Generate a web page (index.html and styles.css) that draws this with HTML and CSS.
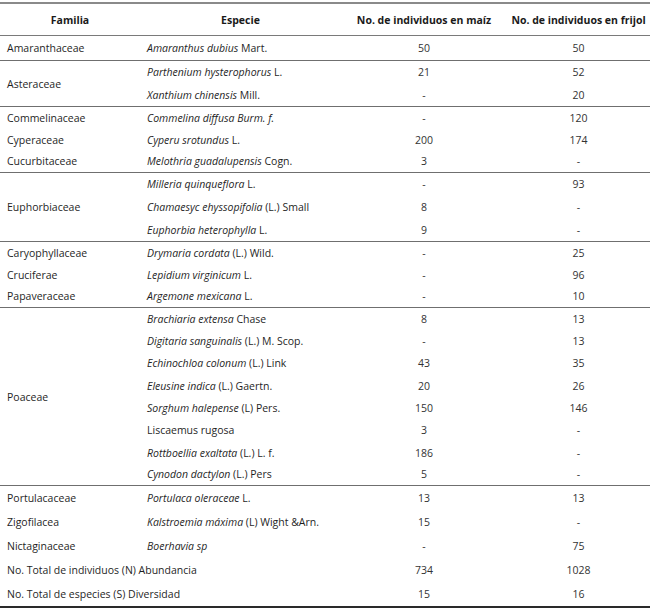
FILE: index.html
```html
<!DOCTYPE html>
<html lang="es">
<head>
<meta charset="utf-8">
<link rel="stylesheet" href="styles.css">
</head>
<body>
<table class="tbl">
  <colgroup>
    <col class="c1"><col class="c2"><col class="c3"><col class="c4">
  </colgroup>
  <thead>
    <tr class="hd">
      <th>Familia</th><th>Especie</th><th>No. de individuos en maíz</th><th>No. de individuos en frijol</th>
    </tr>
  </thead>
  <tbody>
    <tr class="h26 sep"><td>Amaranthaceae</td><td class="sp"><i>Amaranthus dubius</i> Mart.</td><td class="n">50</td><td class="n">50</td></tr>

    <tr class="h23"><td rowspan="2">Asteraceae</td><td class="sp"><i>Parthenium hysterophorus</i> L.</td><td class="n">21</td><td class="n">52</td></tr>
    <tr class="h23 sep"><td class="sp"><i>Xanthium chinensis</i> Mill.</td><td class="n">-</td><td class="n">20</td></tr>

    <tr class="h22"><td>Commelinaceae</td><td class="sp"><i>Commelina diffusa Burm. f.</i></td><td class="n">-</td><td class="n">120</td></tr>
    <tr class="h22"><td>Cyperaceae</td><td class="sp"><i>Cyperu srotundus</i> L.</td><td class="n">200</td><td class="n">174</td></tr>
    <tr class="h22 sep"><td>Cucurbitaceae</td><td class="sp"><i>Melothria guadalupensis</i> Cogn.</td><td class="n">3</td><td class="n">-</td></tr>

    <tr class="h23"><td rowspan="3">Euphorbiaceae</td><td class="sp"><i>Milleria quinqueflora</i> L.</td><td class="n">-</td><td class="n">93</td></tr>
    <tr class="h23"><td class="sp"><i>Chamaesyc ehyssopifolia</i> (L.) Small</td><td class="n">8</td><td class="n">-</td></tr>
    <tr class="h23 sep"><td class="sp"><i>Euphorbia heterophylla</i> L.</td><td class="n">9</td><td class="n">-</td></tr>

    <tr class="h22"><td>Caryophyllaceae</td><td class="sp"><i>Drymaria cordata</i> (L.) Wild.</td><td class="n">-</td><td class="n">25</td></tr>
    <tr class="h22"><td>Cruciferae</td><td class="sp"><i>Lepidium virginicum</i> L.</td><td class="n">-</td><td class="n">96</td></tr>
    <tr class="h22 sep"><td>Papaveraceae</td><td class="sp"><i>Argemone mexicana</i> L.</td><td class="n">-</td><td class="n">10</td></tr>

    <tr class="h22"><td rowspan="8">Poaceae</td><td class="sp"><i>Brachiaria extensa</i> Chase</td><td class="n">8</td><td class="n">13</td></tr>
    <tr class="h22"><td class="sp"><i>Digitaria sanguinalis</i> (L.) M. Scop.</td><td class="n">-</td><td class="n">13</td></tr>
    <tr class="h23"><td class="sp"><i>Echinochloa colonum</i> (L.) Link</td><td class="n">43</td><td class="n">35</td></tr>
    <tr class="h22"><td class="sp"><i>Eleusine indica</i> (L.) Gaertn.</td><td class="n">20</td><td class="n">26</td></tr>
    <tr class="h22"><td class="sp"><i>Sorghum halepense</i> (L) Pers.</td><td class="n">150</td><td class="n">146</td></tr>
    <tr class="h23"><td class="sp">Liscaemus rugosa</td><td class="n">3</td><td class="n">-</td></tr>
    <tr class="h22"><td class="sp"><i>Rottboellia exaltata</i> (L.) L. f.</td><td class="n">186</td><td class="n">-</td></tr>
    <tr class="h22 sep"><td class="sp"><i>Cynodon dactylon</i> (L.) Pers</td><td class="n">5</td><td class="n">-</td></tr>

    <tr class="h24"><td>Portulacaceae</td><td class="sp"><i>Portulaca oleraceae</i> L.</td><td class="n">13</td><td class="n">13</td></tr>
    <tr class="h24"><td>Zigofilacea</td><td class="sp"><i>Kalstroemia máxima</i> (L) Wight &amp;Arn.</td><td class="n">15</td><td class="n">-</td></tr>
    <tr class="h24"><td>Nictaginaceae</td><td class="sp"><i>Boerhavia sp</i></td><td class="n">-</td><td class="n">75</td></tr>
    <tr class="h24"><td colspan="2">No. Total de individuos (N) Abundancia</td><td class="n">734</td><td class="n">1028</td></tr>
    <tr class="h25"><td colspan="2">No. Total de especies (S) Diversidad</td><td class="n">15</td><td class="n">16</td></tr>
  </tbody>
</table>
</body>
</html>
```

FILE: styles.css
```css
html, body {
  margin: 0;
  padding: 0;
  background: #ffffff;
}

body {
  padding-top: 2px;
}

.tbl {
  width: 650px;
  border-collapse: collapse;
  table-layout: fixed;
  font-family: "Open Sans", "Noto Sans", sans-serif;
  font-size: 10.5px;
  color: #1f1f1f;
  border-top: 2px solid #8a8a8a;
  border-bottom: 2px solid #2a2a2a;
}

.c1 { width: 140px; }
.c2 { width: 201px; }
.c3 { width: 166px; }
.c4 { width: 143px; }

.tbl th,
.tbl td {
  padding: 0 0 0 7px;
  vertical-align: middle;
  white-space: nowrap;
  line-height: 14px;
}

.tbl th {
  height: 31px;
  font-weight: 700;
  text-align: center;
  padding: 0;
  border-bottom: 1px solid #7a7a7a;
  color: #1a1a1a;
}

.tbl td.sp {
  padding-left: 7px;
}

.tbl td.n {
  text-align: center;
  padding: 0;
  color: #333333;
}

.tbl i {
  font-style: italic;
}

.h22 { height: 22px; }
.h23 { height: 23px; }
.h24 { height: 24px; }
.h25 { height: 25px; }
.h26 { height: 25px; }

.sep td {
  border-bottom: 1px solid #6f6f6f;
}

.tbl td[rowspan] {
  border-bottom: 1px solid #6f6f6f;
}
```
